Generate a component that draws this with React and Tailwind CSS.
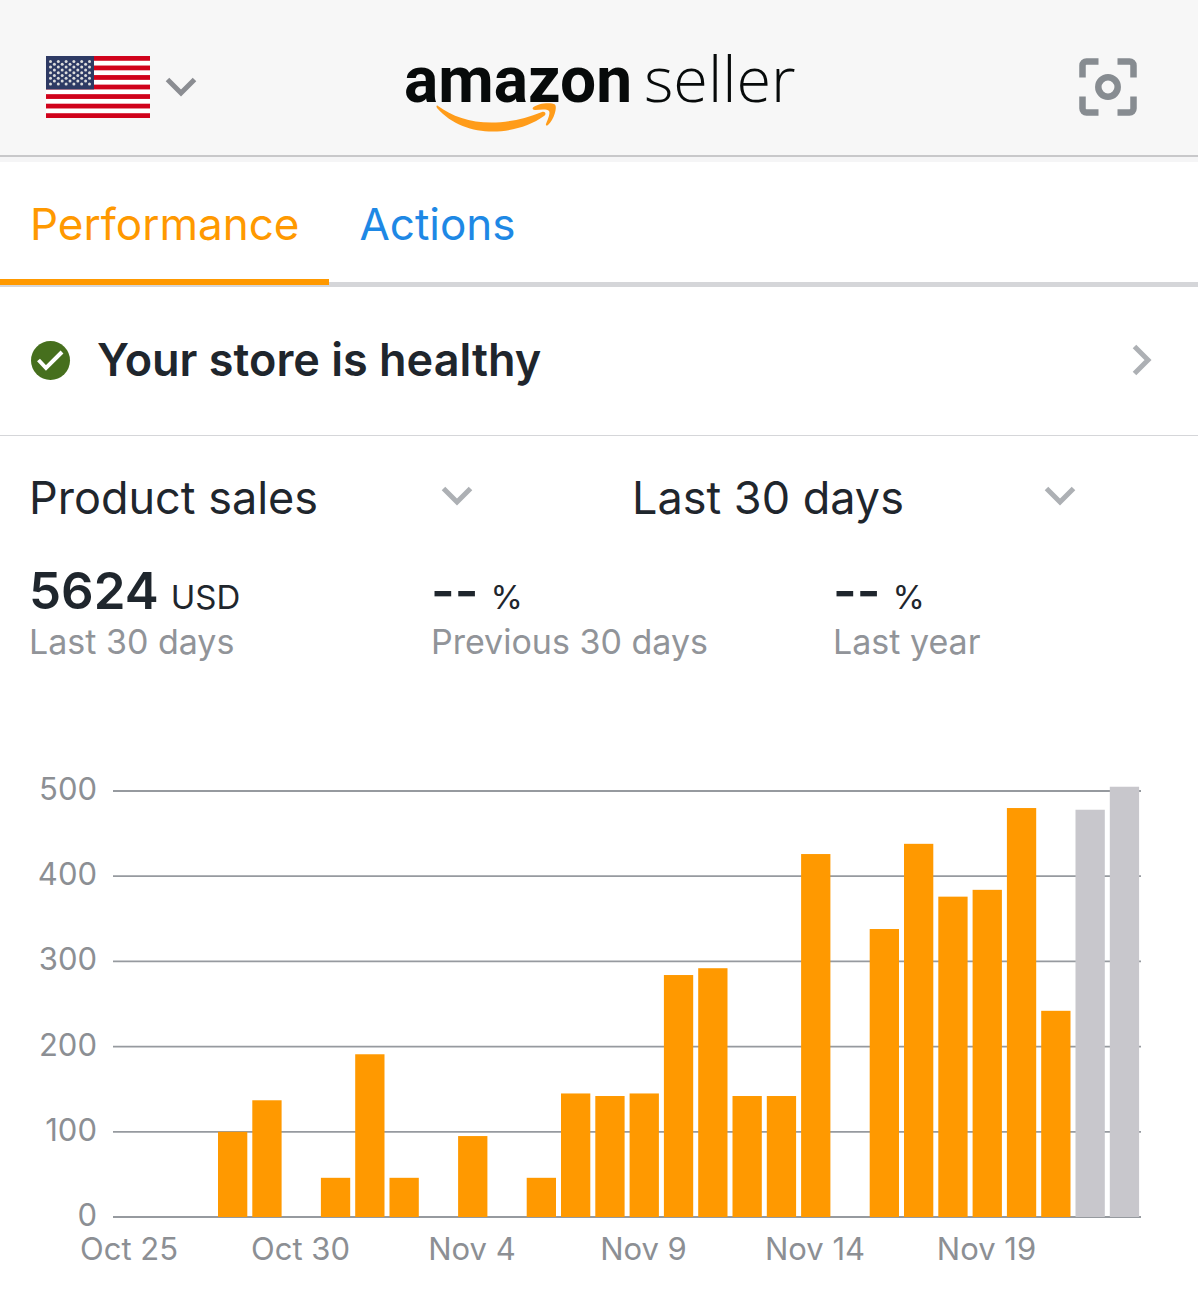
import { useState } from "react";

const DAILY_SALES = [
  0, 0, 0, 100, 137, 0, 46, 191, 46, 0, 95, 0, 46, 145, 142, 145, 284, 292, 142,
  142, 426, 0, 338, 438, 376, 384, 480, 242, 478, 505,
];

const DAY_LABELS = ["Oct 25", "Oct 30", "Nov 4", "Nov 9", "Nov 14", "Nov 19"];
const TICKS = [500, 400, 300, 200, 100, 0];

const STATS = [
  { value: "5624", unit: "USD", label: "Last 30 days" },
  { value: "--", unit: "%", label: "Previous 30 days" },
  { value: "--", unit: "%", label: "Last year" },
];

const Flag = () => (
  <svg viewBox="0 0 104 62" className="w-[104px] h-[62px]" aria-hidden="true">
    <rect width="104" height="62" fill="#fff" />
    {[0, 1, 2, 3, 4, 5, 6].map((i) => (
      <rect key={i} y={i * 9.54} width="104" height="4.77" fill="#d0021b" />
    ))}
    <rect width="48" height="33.4" fill="#2e3a64" />
    {[0, 1, 2, 3, 4, 5, 6, 7, 8].map((row) =>
      Array.from({ length: row % 2 ? 5 : 6 }, (_, col) => (
        <circle
          key={`${row}-${col}`}
          cx={4.5 + col * 7.8 + (row % 2 ? 3.9 : 0)}
          cy={5.5 + row * 2.8}
          r="1.5"
          fill="#dcdcdc"
        />
      ))
    )}
  </svg>
);

const Chevron = ({ className }) => (
  <svg viewBox="0 0 32 20" fill="none" stroke="currentColor" strokeWidth="5" className={className} aria-hidden="true">
    <path d="M2.5 2.5 16 16 29.5 2.5" />
  </svg>
);

const Logo = () => (
  <svg viewBox="0 0 396 96" className="w-[396px] h-24" role="img" aria-label="amazon seller">
    <text x="3" y="63" fontSize="64" fontWeight="700" fill="#070a0a" className="font-['Roboto',sans-serif]">
      amazon
    </text>
    <text x="243" y="63" fontSize="63" fontWeight="300" fill="#070a0a" className="font-['Open_Sans',sans-serif]">
      seller
    </text>
    {/* smile */}
    <g fill="#ff9c1a">
      <path d="M37 67C60 84 96 91 141 73C144 72 146 75 143 77C115 97 64 101 36 69C35 67 35.500 66 37 67Z" />
      <path d="M132 68.500C137 64 150 63 154 65.500C156.500 68 153 81 147 86C145.500 87 144.500 86.500 145 85C147 80 149.500 74 148 72C146 69.500 139 70.500 134 71C132 71 131 70 132 68.500Z" />
    </g>
  </svg>
);

const ScanIcon = () => (
  <svg viewBox="0 0 60 60" fill="none" stroke="#878c91" strokeWidth="6.500" className="w-[60px] h-[60px]" aria-hidden="true">
    <path d="M4.500 20.500V8.500a4 4 0 0 1 4-4h12M39.500 4.500h12a4 4 0 0 1 4 4v12M55.500 39.500v12a4 4 0 0 1-4 4h-12M20.500 55.500h-12a4 4 0 0 1-4-4v-12" />
    <circle cx="30" cy="30" r="9.700" />
  </svg>
);

const Dropdown = ({ label, options }) => (
  <div className="relative w-[444px] max-w-full">
    <select
      aria-label={label}
      className="w-full appearance-none bg-transparent text-[45px] leading-[60px] text-[#1f262d] focus:outline-none"
    >
      {options.map((option) => (
        <option key={option}>{option}</option>
      ))}
    </select>
    <Chevron className="absolute right-0 top-[18px] w-8 h-5 text-[#adb0b4] pointer-events-none" />
  </div>
);

const SalesChart = () => {
  const yFor = (value) => 447 - value * 0.852;

  return (
    <svg viewBox="0 0 1198 527" className="w-full" role="img" aria-label="Product sales by day">
      {TICKS.map((tick) => (
        <g key={tick}>
          <line x1="113" x2="1141" y1={yFor(tick)} y2={yFor(tick)} stroke="#969a9f" strokeWidth="1.800" />
          <text x="97" y={yFor(tick) + 9} textAnchor="end" fontSize="31" fill="#8c8f94">
            {tick}
          </text>
        </g>
      ))}
      {DAILY_SALES.map((value, i) => (
        <rect
          key={i}
          x={115.1 + i * 34.3}
          y={yFor(value)}
          width="29.300"
          height={value * 0.852}
          fill={i > 27 ? "#c8c7cc" : "#ff9900"}
        />
      ))}
      {DAY_LABELS.map((day, i) => (
        <text key={day} x={129 + i * 171.5} y="490" textAnchor="middle" fontSize="31" fill="#8c8f94">
          {day}
        </text>
      ))}
    </svg>
  );
};

const App = () => {
  const [tab, setTab] = useState("Performance");

  return (
    <div className="min-h-screen bg-white font-['Inter',sans-serif] text-[#1f262d]">
      <header className="grid grid-cols-[1fr_auto_1fr] items-center h-[157px] px-[46px] pt-[18px] bg-[#f7f7f7] border-b-2 border-[#c8c8ca]">
        <button type="button" aria-label="Change marketplace" className="flex items-center gap-[15px] justify-self-start">
          <Flag />
          <Chevron className="w-8 h-5 text-[#8b8d92]" />
        </button>
        <Logo />
        <button type="button" aria-label="Scan product" className="justify-self-end px-3.5">
          <ScanIcon />
        </button>
      </header>

      <nav className="flex h-[130px] border-t-[5px] border-t-[#f5f5f6] border-b-[5px] border-b-[#d5d6d9]">
        {["Performance", "Actions"].map((name) => (
          <button
            key={name}
            type="button"
            onClick={() => setTab(name)}
            className={`-mb-[3px] px-[30px] pt-1.5 text-[44px] border-b-[6px] ${
              tab === name ? "text-[#ff9900] border-[#ff9900]" : "text-[#1e88e5] border-transparent"
            }`}
          >
            {name}
          </button>
        ))}
      </nav>

      <a href="#health" className="flex items-center h-[149px] pl-[31px] pr-10 pb-0.5 border-b border-[#d5d6d9]">
        <svg viewBox="0 0 40 40" className="w-10 h-10" aria-hidden="true">
          <circle cx="19.500" cy="20.500" r="19.500" fill="#466f1d" />
          <path d="M7.500 20 15 28 31 12" fill="none" stroke="#fff" strokeWidth="4" />
        </svg>
        <span className="ml-[26px] text-[45px] font-semibold">Your store is healthy</span>
        <Chevron className="ml-auto w-8 h-5 -rotate-90 text-[#adb0b4]" />
      </a>

      <main>
        <section className="pl-[29px] pt-8">
          <div className="grid grid-cols-2 gap-[37px]">
            <Dropdown label="Metric" options={["Product sales", "Units ordered"]} />
            <Dropdown label="Date range" options={["Last 30 days", "Last 7 days"]} />
          </div>
          <div className="grid grid-cols-3 gap-[37px] mt-[38px]">
            {STATS.map((stat) => (
              <div key={stat.label}>
                <p className="flex items-baseline gap-3 leading-[50px]">
                  <span className="text-[51px] font-semibold">{stat.value}</span>
                  <span className="text-[33px]">{stat.unit}</span>
                </p>
                <p className="text-[34px] leading-10 text-[#919499]">{stat.label}</p>
              </div>
            ))}
          </div>
        </section>

        <section className="mt-[108px]">
          <SalesChart />
        </section>
      </main>
    </div>
  );
};

export default App;
